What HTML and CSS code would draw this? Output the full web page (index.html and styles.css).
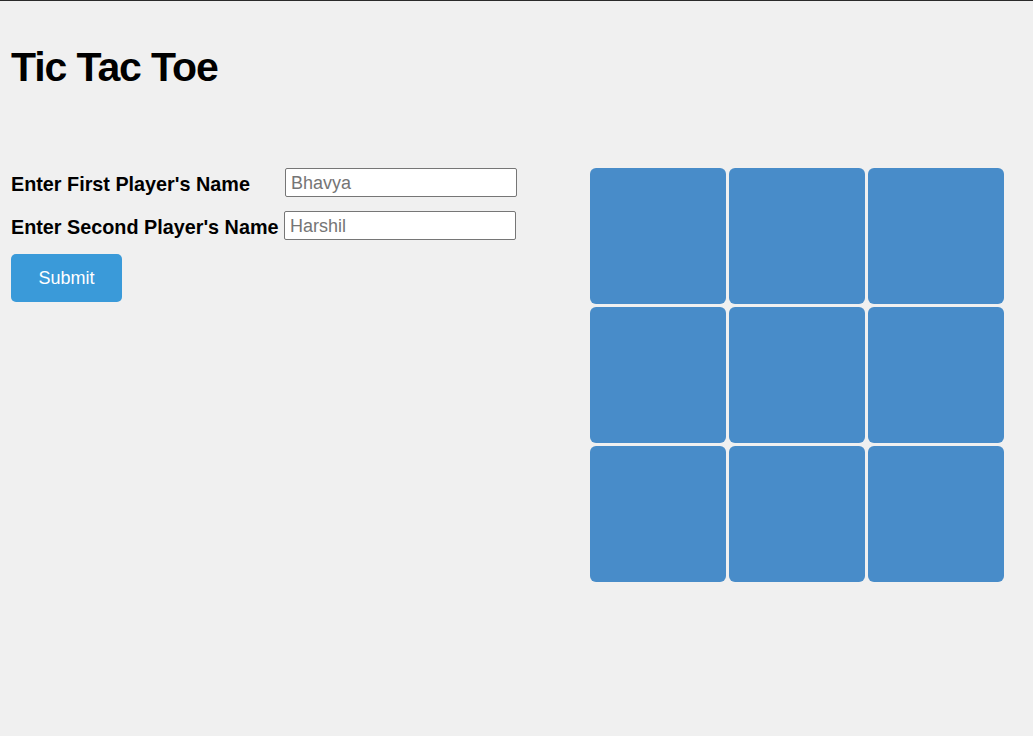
FILE: index.html
```html
<!DOCTYPE html>
<html>
<head>
<meta charset="utf-8">
<title>Tic Tac Toe</title>
<link rel="stylesheet" href="styles.css">
</head>
<body>
<div class="page">
  <h1 class="title">Tic Tac Toe</h1>
  <div class="main">
    <form class="form">
      <div class="row">
        <label class="label first" for="p1">Enter First Player's Name</label>
        <input class="field" id="p1" type="text" placeholder="Bhavya">
      </div>
      <div class="row">
        <label class="label" for="p2">Enter Second Player's Name</label>
        <input class="field" id="p2" type="text" placeholder="Harshil">
      </div>
      <button class="submit" type="button">Submit</button>
    </form>
    <div class="board">
      <div class="cell"></div><div class="cell"></div><div class="cell"></div>
      <div class="cell"></div><div class="cell"></div><div class="cell"></div>
      <div class="cell"></div><div class="cell"></div><div class="cell"></div>
    </div>
  </div>
</div>
</body>
</html>
```

FILE: styles.css
```css
html, body {
  margin: 0;
  padding: 0;
  background: #f0f0f0;
}
body {
  border-top: 1px solid #2a2a2a;
  font-family: "Liberation Sans", Arial, sans-serif;
}
.page {
  padding: 0 0 0 11px;
}
.title {
  margin: 0;
  padding-top: 42px;
  font-size: 41px;
  line-height: 48px;
  font-weight: bold;
  letter-spacing: -1.1px;
  color: #000;
}
.main {
  display: flex;
  margin-top: 77px;
}
.form {
  width: 579px;
  display: flex;
  flex-direction: column;
  align-items: flex-start;
}
.row {
  display: flex;
  align-items: center;
  height: 29px;
  margin-bottom: 14px;
}
.label {
  font-weight: bold;
  font-size: 19.8px;
  padding-top: 3px;
  color: #000;
  width: 273px;
  flex: none;
}
.label.first {
  width: 274px;
}
.field {
  box-sizing: border-box;
  width: 232px;
  height: 29px;
  border: 1px solid #767676;
  border-radius: 2px;
  background: #fff;
  padding: 1px 5px 0;
  font-family: "Liberation Sans", Arial, sans-serif;
  font-size: 18px;
  color: #000;
}
.field::placeholder {
  color: #757575;
}
.submit {
  margin-top: 0;
  width: 111px;
  height: 48px;
  border: none;
  border-radius: 5px;
  background: #3a9ad9;
  color: #fff;
  font-family: "Liberation Sans", Arial, sans-serif;
  font-size: 18px;
}
.board {
  display: grid;
  grid-template-columns: repeat(3, 136px);
  grid-template-rows: repeat(3, 136px);
  gap: 3px;
}
.cell {
  background: #488cc9;
  border-radius: 6px;
}
```
